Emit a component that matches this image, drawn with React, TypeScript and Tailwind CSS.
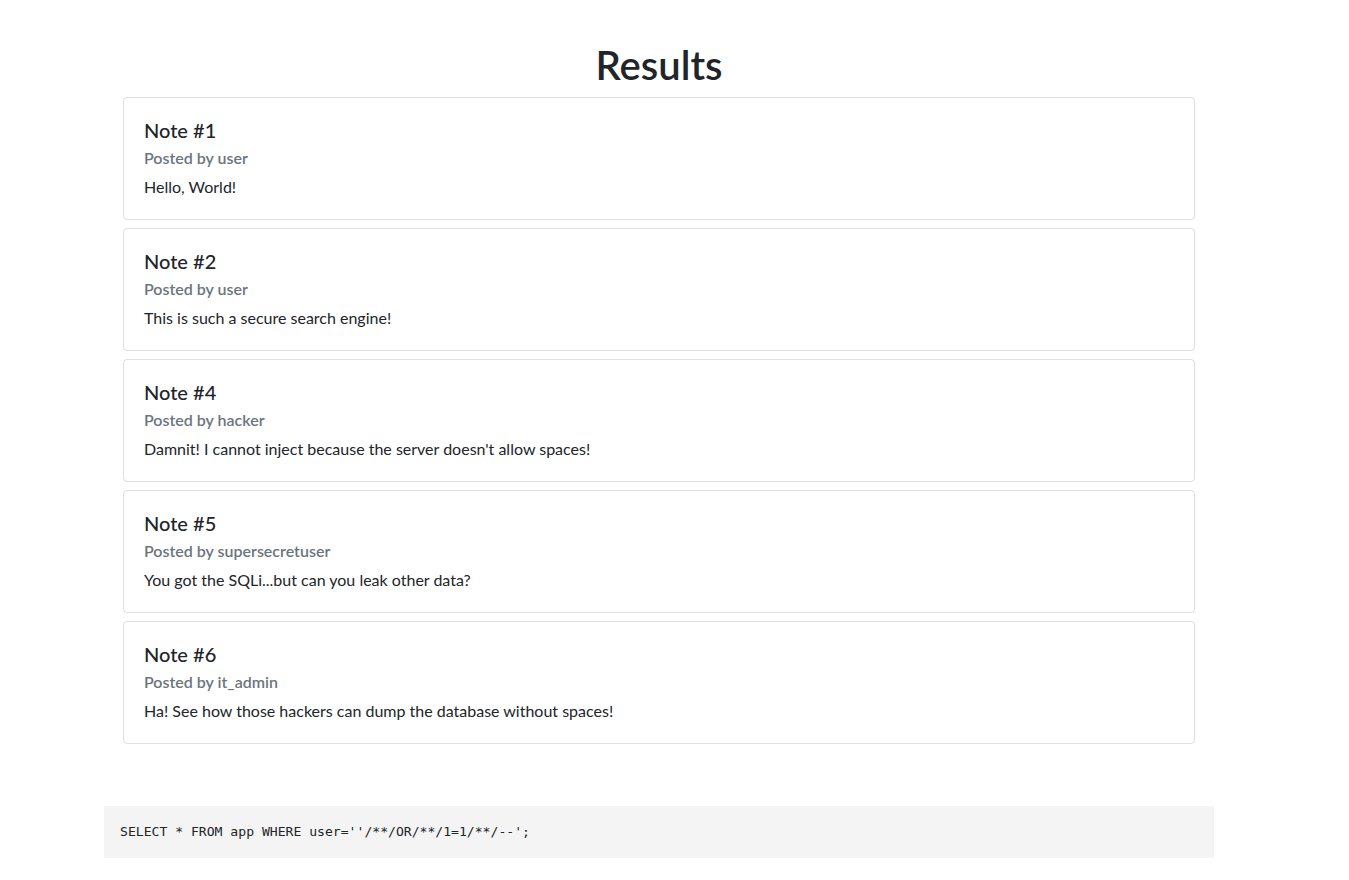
const notes = [
  { id: 1, author: "user", body: "Hello, World!" },
  { id: 2, author: "user", body: "This is such a secure search engine!" },
  { id: 4, author: "hacker", body: "Damnit! I cannot inject because the server doesn't allow spaces!" },
  { id: 5, author: "supersecretuser", body: "You got the SQLi...but can you leak other data?" },
  { id: 6, author: "it_admin", body: "Ha! See how those hackers can dump the database without spaces!" },
];

const App = () => {
  return (
    <div className="min-h-screen bg-white text-[#212529] font-['Lato',sans-serif]">
      <div className="w-[1110px] ml-[104px] pt-[41px]">
        {/* Header */}
        <h1 className="text-center text-[40px] leading-[48px] font-semibold mb-2">Results</h1>

        {/* Notes */}
        <div className="mx-[19px]">
          {notes.map((note) => (
            <div key={note.id} className="border border-black/[0.125] rounded mb-2 p-5">
              <h5 className="text-[20px] leading-[24px] font-medium mb-3">Note #{note.id}</h5>
              <h6 className="text-base leading-[19px] font-semibold text-[#6c757d] -mt-1.5 mb-2">
                Posted by {note.author}
              </h6>
              <p className="text-base leading-6">{note.body}</p>
            </div>
          ))}
        </div>

        {/* Query */}
        <div className="mt-[62px] bg-[#f4f4f4] px-4 py-[17px]">
          <pre className="text-[13.1px] leading-[18px] font-['DejaVu_Sans_Mono',monospace] text-[#212529]">
            SELECT * FROM app WHERE user=''/**/OR/**/1=1/**/--';
          </pre>
        </div>
      </div>
    </div>
  );
};

export default App;
